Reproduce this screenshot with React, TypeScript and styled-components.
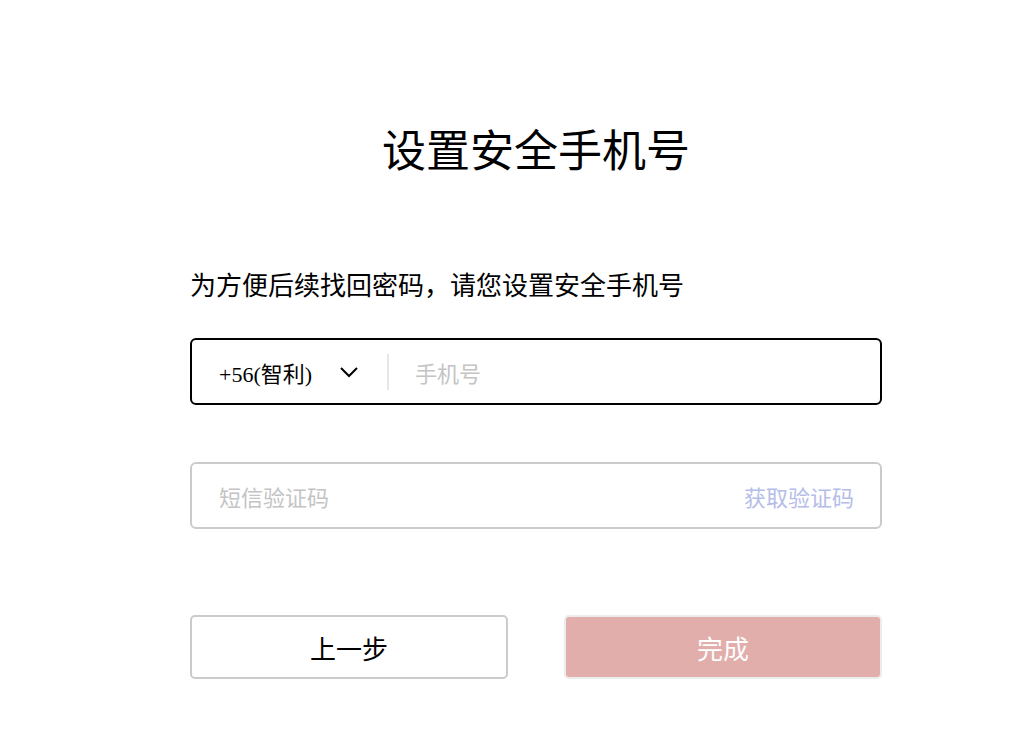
import React from "react";
import styled, { createGlobalStyle } from "styled-components";

const Global = createGlobalStyle`
  html, body { margin: 0; padding: 0; background: #fff; }
  body { font-family: "Liberation Serif", "Noto Sans CJK SC", serif; color: #000; }
  * { box-sizing: border-box; }
`;

const Page = styled.div`
  width: 1012px;
  height: 732px;
  padding: 126px 0 0 190px;
`;

const Panel = styled.div`
  width: 692px;
  display: flex;
  flex-direction: column;
`;

const Title = styled.h1`
  margin: 0;
  font-size: 44px;
  font-weight: normal;
  line-height: 54px;
  text-align: center;
`;

const Subtitle = styled.p`
  margin: 89px 0 0 0;
  font-size: 26px;
  line-height: 36px;
`;

const Field = styled.div<{ $active?: boolean }>`
  height: 67px;
  border: 2px solid ${(p) => (p.$active ? "#000" : "#cbcbcb")};
  border-radius: 6px;
  display: flex;
  align-items: center;
  padding: 0 26px 0 27px;
`;

const PhoneField = styled(Field)`
  margin-top: 33px;
`;

const CodeField = styled(Field)`
  margin-top: 57px;
`;

const Country = styled.div`
  display: flex;
  align-items: center;
  font-size: 22px;
  width: 168px;
`;

const Chevron = styled.svg`
  margin-left: 27px;
  width: 20px;
  height: 12px;
`;

const Divider = styled.div`
  width: 2px;
  height: 36px;
  background: #e6e6e6;
`;

const Placeholder = styled.span<{ $gap?: number }>`
  font-size: 22px;
  color: #c4c4c4;
  margin-left: ${(p) => p.$gap ?? 0}px;
  flex: 1;
`;

const GetCode = styled.span`
  font-size: 22px;
  color: #b5bde9;
`;

const Actions = styled.div`
  margin-top: 86px;
  display: grid;
  grid-template-columns: 318px 318px;
  justify-content: space-between;
`;

const Button = styled.button<{ $primary?: boolean }>`
  height: 64px;
  border-radius: 5px;
  font-family: inherit;
  font-size: 26px;
  border: 2px solid ${(p) => (p.$primary ? "#ececec" : "#cbcbcb")};
  background: ${(p) => (p.$primary ? "#e2aeab" : "#fff")};
  color: ${(p) => (p.$primary ? "#fff" : "#000")};
  cursor: pointer;
`;

export default function App() {
  return (
    <Page>
      <Global />
      <Panel>
        <Title>设置安全手机号</Title>
        <Subtitle>为方便后续找回密码，请您设置安全手机号</Subtitle>
        <PhoneField $active>
          <Country>
            +56(智利)
            <Chevron viewBox="0 0 20 12" fill="none">
              <path d="M2 2 L10 10 L18 2" stroke="#000" strokeWidth="2" />
            </Chevron>
          </Country>
          <Divider />
          <Placeholder $gap={26}>手机号</Placeholder>
        </PhoneField>
        <CodeField>
          <Placeholder>短信验证码</Placeholder>
          <GetCode>获取验证码</GetCode>
        </CodeField>
        <Actions>
          <Button>上一步</Button>
          <Button $primary>完成</Button>
        </Actions>
      </Panel>
    </Page>
  );
}
